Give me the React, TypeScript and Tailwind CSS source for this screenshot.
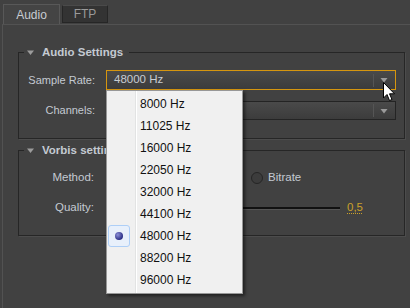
import React from "react";

const items = ["8000 Hz","11025 Hz","16000 Hz","22050 Hz","32000 Hz","44100 Hz","48000 Hz","88200 Hz","96000 Hz"];

function Arrow() {
  return (
    <div className="flex items-center h-full">
      <div className="w-px h-[13px] bg-[#2a2a2a] border-r border-[#555]" />
      <svg width="18" height="10" viewBox="0 0 18 10" className="ml-[1px]">
        <path d="M5.5 3 L12.5 3 L9 7.5 Z" fill="#9a9a9a" />
      </svg>
    </div>
  );
}

function Select({ active, text, h }: { active?: boolean; text?: string; h: string }) {
  return (
    <div className={`flex-1 flex items-center justify-between pl-[7px] pr-[2px] bg-gradient-to-b from-[#4a4a4a] to-[#3c3c3c] border ${active ? "border-[#d6960f]" : "border-[#242424]"} ${h}`}>
      <span className="text-[#c8ccd2] text-[11.5px]">{text}</span>
      <Arrow />
    </div>
  );
}

function Header({ title }: { title: string }) {
  return (
    <div className="-mt-[8px] ml-[5px] w-fit flex items-center gap-[6px] bg-[#414141] px-[2px] h-[16px]">
      <svg width="10" height="8" viewBox="0 0 10 8"><path d="M1 1.5 L8 1.5 L4.5 6 Z" fill="#9c9c9c" /></svg>
      <span className="font-bold text-[11.5px] text-[#c4cad2] pr-[4px]">{title}</span>
    </div>
  );
}

export default function App() {
  return (
    <div className="relative w-[410px] h-[308px] overflow-hidden bg-[#414141]" style={{ fontFamily: '"Liberation Sans", Arial, sans-serif' }}>
      {/* tabs */}
      <div className="h-[24px] flex items-end pl-[3px] gap-[2px]">
        <div className="w-[57px] h-[20px] bg-[#444] border border-b-0 border-[#585858] flex items-center justify-center text-[12px] text-[#c8ccd2]">Audio</div>
        <div className="w-[46px] h-[18px] mb-[1px] bg-[#333] border border-[#262626] border-t-[#4a4a4a] flex items-center justify-center text-[12px] text-[#9a9a9a]">FTP</div>
      </div>
      <div className="ml-[2px] h-[284px] border-t border-l border-[#525252] pl-[15px] pr-[5px] pt-[27px]">
        {/* Audio settings */}
        <div className="h-[87px] border border-[#262626] shadow-[1px_1px_0_#4c4c4c]">
          <Header title="Audio Settings" />
          <div className="flex items-center mt-[9px] pr-[8px]">
            <div className="w-[76px] text-right text-[11px] text-[#c4cad2]">Sample Rate:</div>
            <div className="ml-[11px] flex-1 flex"><Select active text="48000 Hz" h="h-[20px]" /></div>
          </div>
          <div className="flex items-center mt-[11px] pr-[8px]">
            <div className="w-[76px] text-right text-[11px] text-[#c4cad2]">Channels:</div>
            <div className="ml-[11px] flex-1 flex"><Select h="h-[19px]" /></div>
          </div>
        </div>
        {/* Vorbis */}
        <div className="mt-[11px] h-[86px] border border-[#262626] shadow-[1px_1px_0_#4c4c4c]">
          <Header title="Vorbis settings" />
          <div className="flex items-center mt-[11px] h-[16px]">
            <div className="w-[75px] text-right text-[11.5px] text-[#c4cad2]">Method:</div>
            <div className="ml-[157px] flex items-center gap-[5px]">
              <div className="w-[12px] h-[12px] rounded-full border border-[#252525] bg-[#3c3c3c]" />
              <span className="text-[11.5px] text-[#c4cad2]">Bitrate</span>
            </div>
          </div>
          <div className="flex items-center mt-[14px] h-[16px]">
            <div className="w-[75px] text-right text-[11.5px] text-[#c4cad2]">Quality:</div>
            <div className="ml-[12px] w-[234px] h-[3px] bg-[#111] border-b border-[#555]" />
            <span className="ml-[7px] text-[11.5px] text-[#c9a02a] underline decoration-dotted underline-offset-2">0,5</span>
          </div>
        </div>
      </div>

      {/* dropdown menu */}
      <div className="absolute left-[106px] top-[90px] w-[137px] h-[204px] bg-[#f0f0f0] border border-[#979797] shadow-[2px_2px_3px_rgba(0,0,0,0.5)] flex">
        <div className="w-[29px] border-r border-[#e2e3e3] shadow-[1px_0_0_#fff]" />
        <div className="flex-1 pt-[2px]">
          {items.map((it) => (
            <div key={it} className="relative h-[22px] flex items-center pl-[4px] text-[12px] text-[#111]">
              {it === "48000 Hz" && (
                <div className="absolute left-[-28px] top-0 w-[22px] h-[22px] rounded-[3px] border border-[#aecff7] bg-[#e8f0fb] flex items-center justify-center">
                  <div className="w-[8px] h-[8px] rounded-full bg-[radial-gradient(circle_at_35%_35%,#8c90d8,#2c2f86_70%)]" />
                </div>
              )}
              {it}
            </div>
          ))}
        </div>
      </div>

      {/* cursor */}
      <svg className="absolute left-[383px] top-[82px]" width="14" height="21" viewBox="0 0 14 21">
        <path d="M0.5 0.5 L0.5 16 L4 12.5 L6.5 18.5 L9 17.5 L6.5 11.8 L11.5 11.8 Z" fill="#fff" stroke="#000" strokeWidth="1" strokeLinejoin="round" />
      </svg>
    </div>
  );
}
